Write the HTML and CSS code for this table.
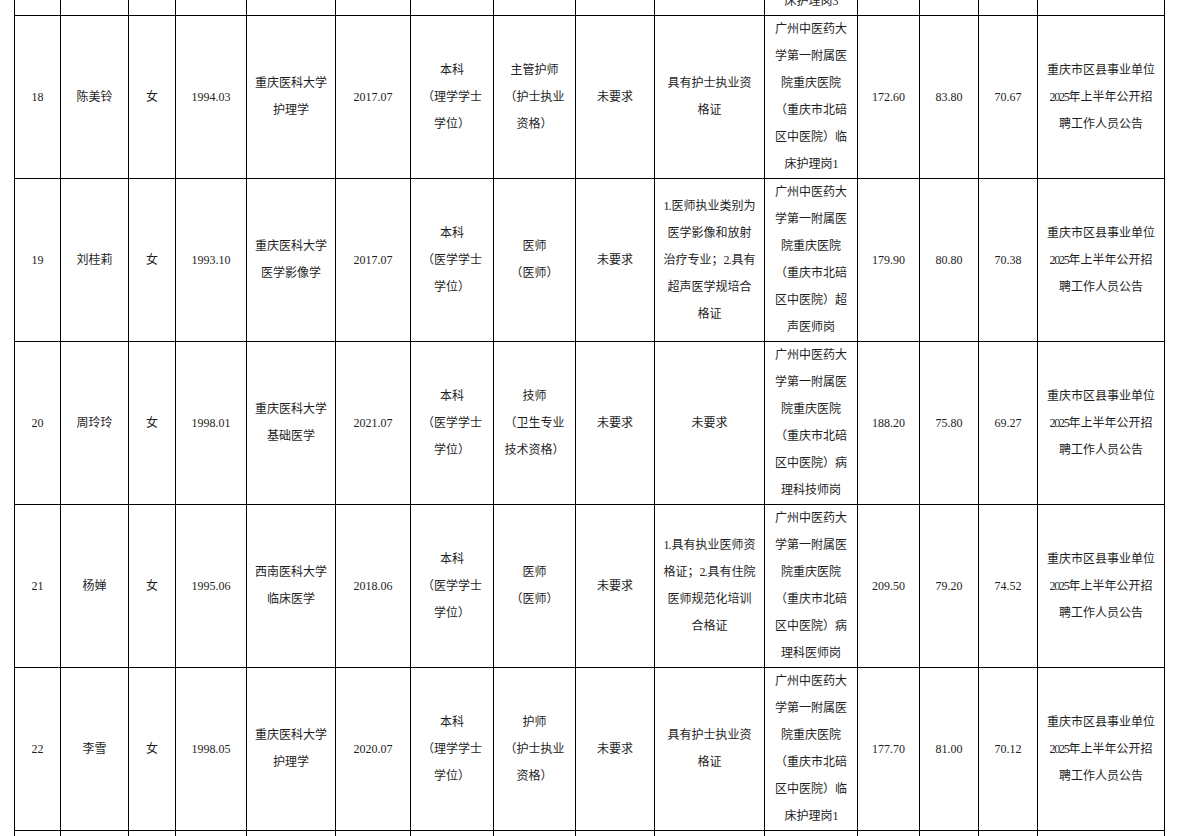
FILE: index.html
```html
<!DOCTYPE html>
<html lang="zh-CN">
<head>
<meta charset="utf-8">
<title>公示名单</title>
<link rel="stylesheet" href="styles.css">
</head>
<body>
<table class="list">
<colgroup>
<col class="c1"><col class="c2"><col class="c3"><col class="c4"><col class="c5">
<col class="c6"><col class="c7"><col class="c8"><col class="c9"><col class="c10">
<col class="c11"><col class="c12"><col class="c13"><col class="c14"><col class="c15">
</colgroup>
<tbody>
<tr class="row">
<td></td><td></td><td></td><td></td><td></td><td></td><td></td><td></td><td></td><td></td>
<td>广州中医药大<br>学第一附属医<br>院重庆医院<br>（重庆市北碚<br>区中医院）临<br>床护理岗<span class="n">3</span></td>
<td></td><td></td><td></td><td></td>
</tr>
<tr class="row">
<td>18</td><td>陈美铃</td><td>女</td><td>1994.03</td>
<td>重庆医科大学<br>护理学</td><td>2017.07</td>
<td>本科<br>（理学学士<br>学位）</td>
<td>主管护师<br>（护士执业<br>资格）</td>
<td>未要求</td>
<td>具有护士执业资<br>格证</td>
<td>广州中医药大<br>学第一附属医<br>院重庆医院<br>（重庆市北碚<br>区中医院）临<br>床护理岗<span class="n">1</span></td>
<td>172.60</td><td>83.80</td><td>70.67</td>
<td>重庆市区县事业单位<br><span class="n">2025</span>年上半年公开招<br>聘工作人员公告</td>
</tr>
<tr class="row">
<td>19</td><td>刘桂莉</td><td>女</td><td>1993.10</td>
<td>重庆医科大学<br>医学影像学</td><td>2017.07</td>
<td>本科<br>（医学学士<br>学位）</td>
<td>医师<br>（医师）</td>
<td>未要求</td>
<td><span class="n">1</span>.医师执业类别为<br>医学影像和放射<br>治疗专业；<span class="n">2</span>.具有<br>超声医学规培合<br>格证</td>
<td>广州中医药大<br>学第一附属医<br>院重庆医院<br>（重庆市北碚<br>区中医院）超<br>声医师岗</td>
<td>179.90</td><td>80.80</td><td>70.38</td>
<td>重庆市区县事业单位<br><span class="n">2025</span>年上半年公开招<br>聘工作人员公告</td>
</tr>
<tr class="row">
<td>20</td><td>周玲玲</td><td>女</td><td>1998.01</td>
<td>重庆医科大学<br>基础医学</td><td>2021.07</td>
<td>本科<br>（医学学士<br>学位）</td>
<td>技师<br>（卫生专业<br>技术资格）</td>
<td>未要求</td>
<td>未要求</td>
<td>广州中医药大<br>学第一附属医<br>院重庆医院<br>（重庆市北碚<br>区中医院）病<br>理科技师岗</td>
<td>188.20</td><td>75.80</td><td>69.27</td>
<td>重庆市区县事业单位<br><span class="n">2025</span>年上半年公开招<br>聘工作人员公告</td>
</tr>
<tr class="row">
<td>21</td><td>杨婵</td><td>女</td><td>1995.06</td>
<td>西南医科大学<br>临床医学</td><td>2018.06</td>
<td>本科<br>（医学学士<br>学位）</td>
<td>医师<br>（医师）</td>
<td>未要求</td>
<td><span class="n">1</span>.具有执业医师资<br>格证；<span class="n">2</span>.具有住院<br>医师规范化培训<br>合格证</td>
<td>广州中医药大<br>学第一附属医<br>院重庆医院<br>（重庆市北碚<br>区中医院）病<br>理科医师岗</td>
<td>209.50</td><td>79.20</td><td>74.52</td>
<td>重庆市区县事业单位<br><span class="n">2025</span>年上半年公开招<br>聘工作人员公告</td>
</tr>
<tr class="row">
<td>22</td><td>李雪</td><td>女</td><td>1998.05</td>
<td>重庆医科大学<br>护理学</td><td>2020.07</td>
<td>本科<br>（理学学士<br>学位）</td>
<td>护师<br>（护士执业<br>资格）</td>
<td>未要求</td>
<td>具有护士执业资<br>格证</td>
<td>广州中医药大<br>学第一附属医<br>院重庆医院<br>（重庆市北碚<br>区中医院）临<br>床护理岗<span class="n">1</span></td>
<td>177.70</td><td>81.00</td><td>70.12</td>
<td>重庆市区县事业单位<br><span class="n">2025</span>年上半年公开招<br>聘工作人员公告</td>
</tr>
<tr class="row">
<td></td><td></td><td></td><td></td><td></td><td></td><td></td><td></td><td></td><td></td>
<td></td><td></td><td></td><td></td><td></td>
</tr>
</tbody>
</table>
</body>
</html>
```

FILE: styles.css
```css
html, body {
  margin: 0;
  padding: 0;
  background: #ffffff;
  overflow: hidden;
}

.list {
  border-collapse: collapse;
  table-layout: fixed;
  width: 1151px;
  margin: -148px 0 0 14px;
  font-family: "Liberation Serif", "Noto Sans CJK SC", serif;
  font-size: 12px;
  line-height: 27px;
  color: #1e1e1e;
}

.list td {
  border: 1px solid #000000;
  padding: 0;
  text-align: center;
  vertical-align: middle;
  white-space: nowrap;
  overflow: hidden;
}

.row {
  height: 163px;
}

.n {
  letter-spacing: -1.2px;
}

.c1 { width: 46px; }
.c2 { width: 68px; }
.c3 { width: 47px; }
.c4 { width: 71px; }
.c5 { width: 89px; }
.c6 { width: 75px; }
.c7 { width: 83px; }
.c8 { width: 82px; }
.c9 { width: 79px; }
.c10 { width: 110px; }
.c11 { width: 93px; }
.c12 { width: 62px; }
.c13 { width: 59px; }
.c14 { width: 59px; }
.c15 { width: 127px; }
```
